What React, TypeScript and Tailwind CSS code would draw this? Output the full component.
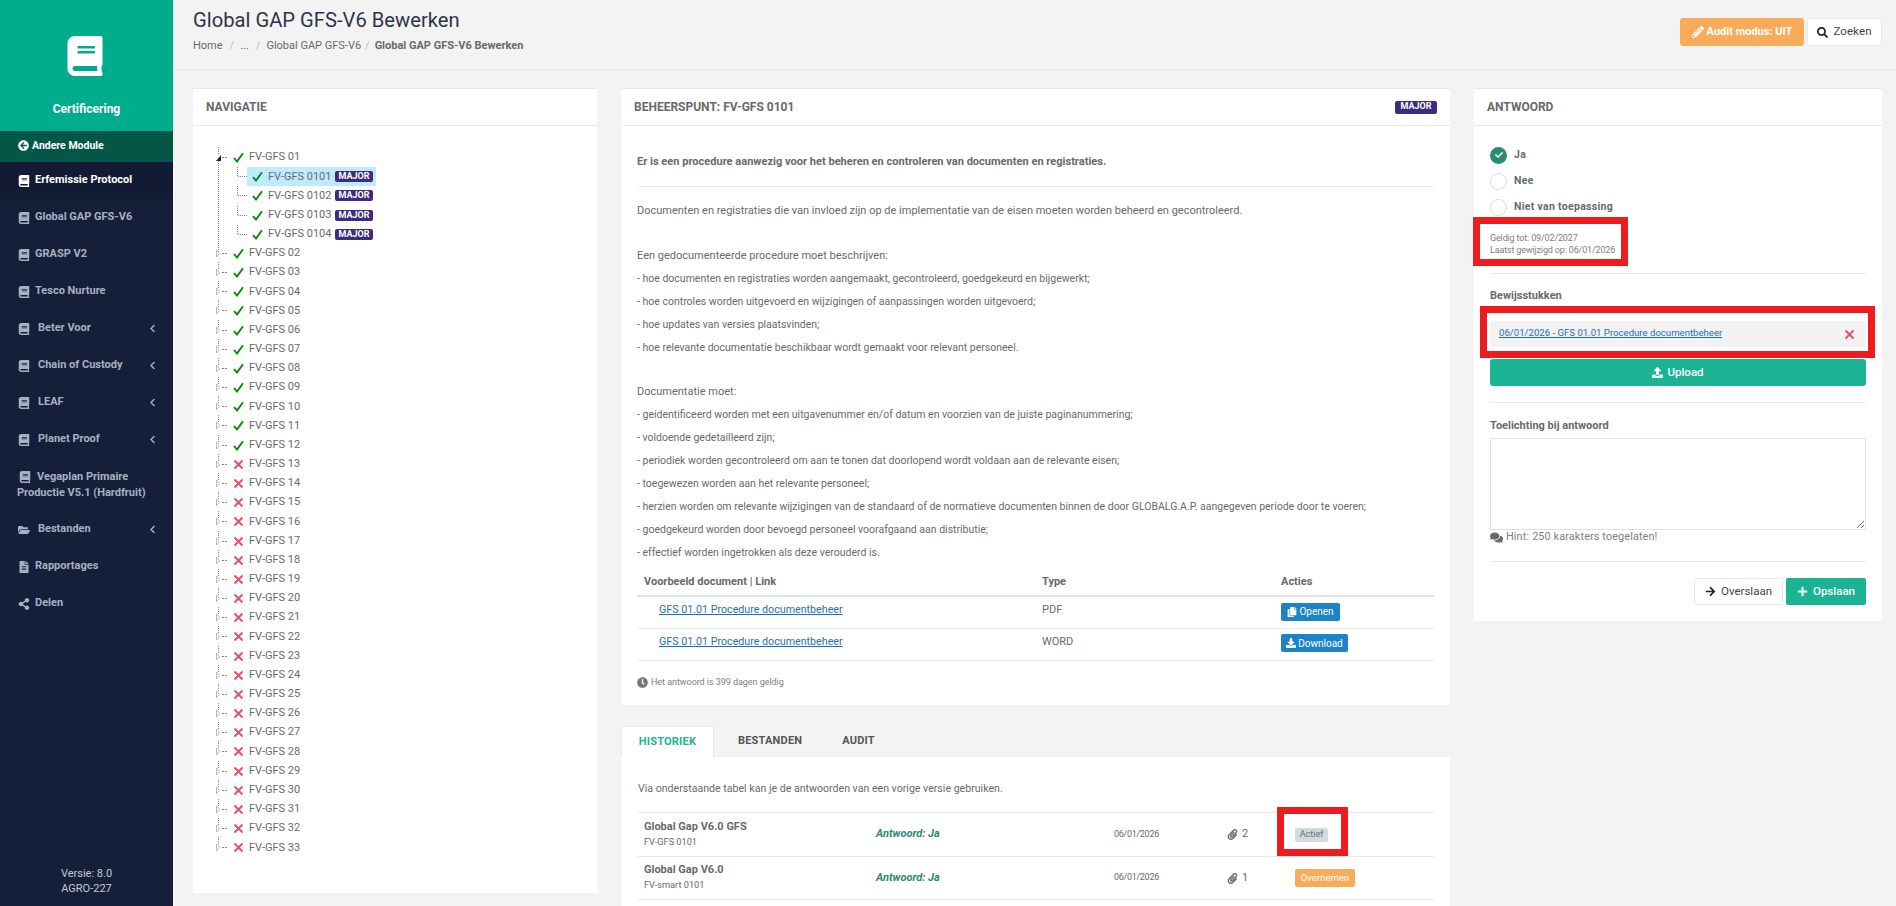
import React from "react";
import {
  FaBook, FaArrowCircleLeft, FaChevronLeft, FaFolderOpen, FaFileAlt, FaShareAlt, FaPencilAlt, FaSearch,
  FaUpload, FaArrowRight, FaPlus, FaComments, FaPaperclip, FaClock, FaCopy, FaDownload, FaCheck,
} from "react-icons/fa";

const Major = () => (
  <span className="inline-flex h-[11px] w-[38px] shrink-0 items-center justify-center rounded-[2px] bg-[#3d2b80] text-[9px] leading-none font-bold text-white">
    MAJOR
  </span>
);

const Tick = () => (
  <svg width="11" height="11" viewBox="0 0 11 11" className="shrink-0">
    <path d="M1 6.2 L4 9.5 L10 1.2" fill="none" stroke="#0b860b" strokeWidth="1.9" />
  </svg>
);
const Cross = () => (
  <svg width="11" height="11" viewBox="0 0 11 11" className="shrink-0">
    <path d="M1.5 1.5 L9.5 9.5 M9.5 1.5 L1.5 9.5" fill="none" stroke="#ed4f5f" strokeWidth="1.9" />
  </svg>
);

const dots = { stroke: "#888", strokeWidth: 1, strokeDasharray: "1 1", fill: "none" } as const;

function TopConnector({ open }: { open?: boolean }) {
  return (
    <svg width="18" height="19" viewBox="0 0 18 19" className="shrink-0 overflow-visible">
      <path d="M3.5 -1 V6" {...dots} />
      {open ? (
        <>
          <path d="M1 13 H6 V7 Z" fill="#222" />
          <path d="M3.5 13 V104" {...dots} />
        </>
      ) : (
        <path d="M1.5 6 L4.5 9.5 L1.5 13 Z" fill="none" stroke="#bbb" strokeWidth="1" />
      )}
      <path d="M7 9.5 H13" {...dots} strokeDasharray="2 1" />
    </svg>
  );
}

function ChildConnector() {
  return (
    <svg width="32" height="19" viewBox="0 0 32 19" className="shrink-0 overflow-visible">
      <path d="M22.5 0 V9.5 H32" {...dots} />
    </svg>
  );
}

function TopRow({ label, ok, open }: { label: string; ok: boolean; open?: boolean }) {
  return (
    <div className="flex h-[19.18px] items-center text-[11px] text-[#676a6c]">
      <TopConnector open={open} />
      {ok ? <Tick /> : <Cross />}
      <span className="ml-[5px] whitespace-nowrap">{label}</span>
    </div>
  );
}

function ChildRow({ label, active }: { label: string; active?: boolean }) {
  return (
    <div className="flex h-[19.18px] items-center text-[11px] text-[#676a6c]">
      <ChildConnector />
      <div className={`flex h-[19px] w-[129px] items-center pl-[5px] ${active ? "bg-[#beebff]" : ""}`}>
        <Tick />
        <span className="ml-[5px] w-[67px] whitespace-nowrap">{label}</span>
        <Major />
      </div>
    </div>
  );
}

const okTop = ["02", "03", "04", "05", "06", "07", "08", "09", "10", "11", "12"];
const badTop = ["13", "14", "15", "16", "17", "18", "19", "20", "21", "22", "23", "24", "25", "26", "27", "28", "29", "30", "31", "32", "33"];

function NavItem({ label, active, chevron, icon }: { label: string; active?: boolean; chevron?: boolean; icon?: React.ReactNode }) {
  return (
    <div className={`flex h-[37px] items-center pl-[19px] text-[11px] font-bold ${active ? "bg-[#131a33] text-white" : "text-[#a7b1c2]"}`}>
      <span className="flex w-[10px] justify-center text-[12px] [&>svg]:shrink-0">{icon ?? <FaBook />}</span>
      <span className={chevron ? "ml-[9px]" : "ml-[6px]"}>{label}</span>
      {chevron && <FaChevronLeft className="absolute left-[148px] text-[9px]" />}
    </div>
  );
}

function Card({ title, right, children, className }: { title: string; right?: React.ReactNode; children: React.ReactNode; className?: string }) {
  return (
    <section className={`bg-white ${className ?? ""}`}>
      <header className="flex h-[38px] items-center justify-between border-t border-b border-[#e7eaec] px-[13px] text-[12px] font-bold text-[#676a6c]">
        <span>{title}</span>
        {right}
      </header>
      {children}
    </section>
  );
}

const Line = ({ children }: { children: React.ReactNode }) => <p className="h-[23px] text-[11px] leading-[23px] text-[#676a6c]">{children}</p>;
const Item = ({ children }: { children: React.ReactNode }) => <p className="h-[23px] text-[10.5px] leading-[23px] text-[#676a6c]">{children}</p>;

function Radio({ label, on }: { label: string; on?: boolean }) {
  return (
    <div className="flex h-[26px] items-center pl-[16px]">
      {on ? (
        <span className="flex h-[17px] w-[17px] items-center justify-center rounded-full bg-[#2a8a73] text-[8px] text-white">
          <FaCheck />
        </span>
      ) : (
        <span className="h-[17px] w-[17px] rounded-full border border-[#dcdcdc]" />
      )}
      <span className="ml-[7px] text-[10.5px] font-bold tracking-[0.3px] text-[#676a6c]">{label}</span>
    </div>
  );
}

const Frame = ({ className }: { className: string }) => <div className={`pointer-events-none absolute border-[7px] border-[#ec1c1f] ${className}`} />;

export default function App() {
  return (
    <div className="flex h-[906px] w-[1896px] overflow-hidden bg-[#f3f3f3] font-['Roboto','Liberation_Sans',sans-serif] text-[#676a6c]">
      <aside className="relative flex w-[173px] shrink-0 flex-col bg-[#161f3a]">
        <div className="flex h-[131px] flex-col items-center bg-[#00ac8c] pt-[36px] text-white">
          <FaBook className="-ml-[3px] text-[40px]" />
          <div className="mt-[24px] text-[12px] font-bold">Certificering</div>
        </div>
        <div className="flex h-[31px] items-center bg-[#045746] pb-[2px] pl-[18px] text-[10.5px] font-bold text-white">
          <FaArrowCircleLeft className="mr-[3px] text-[11px]" />
          Andere Module
        </div>
        <NavItem label="Erfemissie Protocol" active />
        <NavItem label="Global GAP GFS-V6" />
        <NavItem label="GRASP V2" />
        <NavItem label="Tesco Nurture" />
        <NavItem label="Beter Voor" chevron />
        <NavItem label="Chain of Custody" chevron />
        <NavItem label="LEAF" chevron />
        <NavItem label="Planet Proof" chevron />
        <div className="flex h-[53px] flex-col justify-center pl-[17px] text-[11px] leading-[16px] font-bold text-[#a7b1c2]">
          <div className="flex items-center pl-[2px]">
            <FaBook className="text-[12px]" />
            <span className="ml-[6px]">Vegaplan Primaire</span>
          </div>
          <div>Productie V5.1 (Hardfruit)</div>
        </div>
        <NavItem label="Bestanden" chevron icon={<FaFolderOpen />} />
        <NavItem label="Rapportages" icon={<FaFileAlt />} />
        <NavItem label="Delen" icon={<FaShareAlt />} />
        <div className="mt-auto pb-[10px] text-center text-[11px] leading-[15px] text-[#c4cad6]">
          <div>Versie: 8.0</div>
          <div>AGRO-227</div>
        </div>
      </aside>

      <main className="flex min-w-0 flex-1 flex-col">
        <div className="flex h-[70px] shrink-0 justify-between border-b border-[#e7e7e7] pl-[20px] pr-[14px]">
          <div>
            <h1 className="mt-[8px] text-[20.2px] leading-[24px] text-[#2f3349]">Global GAP GFS-V6 Bewerken</h1>
            <div className="mt-[6px] flex text-[11px] leading-[16px] text-[#676a6c]">
              <span>Home</span>
              <span className="mr-[6px] ml-[7px] text-[#bbb]">/</span>
              <span>...</span>
              <span className="mr-[6px] ml-[7px] text-[#bbb]">/</span>
              <span>Global GAP GFS-V6</span>
              <span className="mx-[4px] text-[#bbb]">/</span>
              <span className="ml-[1px] font-bold">Global GAP GFS-V6 Bewerken</span>
            </div>
          </div>
          <div className="mt-[18px] flex h-[28px] gap-[3px]">
            <button className="flex w-[124px] items-center justify-center rounded-[3px] bg-[#f8ac59] text-[11px] font-bold text-white">
              <FaPencilAlt className="mr-[3px] text-[12px]" />
              Audit modus: UIT
            </button>
            <button className="flex w-[75px] items-center justify-center rounded-[3px] border border-[#e7eaec] bg-white text-[11.5px] tracking-[0.1px] text-[#444]">
              <FaSearch className="mr-[5px] text-[11px] text-[#222]" />
              Zoeken
            </button>
          </div>
        </div>

        <div className="flex gap-[24px] pt-[18px] pl-[20px]">
          <Card title="NAVIGATIE" className="h-[805px] w-[404px] shrink-0">
            <div className="pt-[22px] pl-[22px]">
              <TopRow label="FV-GFS 01" ok open />
              <ChildRow label="FV-GFS 0101" active />
              <ChildRow label="FV-GFS 0102" />
              <ChildRow label="FV-GFS 0103" />
              <ChildRow label="FV-GFS 0104" />
              {okTop.map((n) => (
                <TopRow key={n} label={`FV-GFS ${n}`} ok />
              ))}
              {badTop.map((n) => (
                <TopRow key={n} label={`FV-GFS ${n}`} ok={false} />
              ))}
            </div>
          </Card>

          <div className="w-[829px] shrink-0">
            <Card
              title="BEHEERSPUNT: FV-GFS 0101"
              right={<span className="inline-flex h-[13px] w-[42px] items-center justify-center rounded-[2px] bg-[#3d2b80] text-[9px] font-bold text-white">MAJOR</span>}
              className="h-[617px]"
            >
              <div className="px-[16px] pt-[24px]">
                <p className="h-[24px] text-[11.05px] leading-[24px] font-bold text-[#676a6c]">Er is een procedure aanwezig voor het beheren en controleren van documenten en registraties.</p>
                <div className="mt-[12px] border-t border-[#e7eaec]" />
                <div className="mt-[12px]">
                  <Line>Documenten en registraties die van invloed zijn op de implementatie van de eisen moeten worden beheerd en gecontroleerd.</Line>
                  <div className="h-[22px]" />
                  <Line>Een gedocumenteerde procedure moet beschrijven:</Line>
                  <Item>- hoe documenten en registraties worden aangemaakt, gecontroleerd, goedgekeurd en bijgewerkt;</Item>
                  <Item>- hoe controles worden uitgevoerd en wijzigingen of aanpassingen worden uitgevoerd;</Item>
                  <Item>- hoe updates van versies plaatsvinden;</Item>
                  <Item>- hoe relevante documentatie beschikbaar wordt gemaakt voor relevant personeel.</Item>
                  <div className="h-[21px]" />
                  <Line>Documentatie moet:</Line>
                  <Item>- geidentificeerd worden met een uitgavenummer en/of datum en voorzien van de juiste paginanummering;</Item>
                  <Item>- voldoende gedetailleerd zijn;</Item>
                  <Item>- periodiek worden gecontroleerd om aan te tonen dat doorlopend wordt voldaan aan de relevante eisen;</Item>
                  <Item>- toegewezen worden aan het relevante personeel;</Item>
                  <Item>- herzien worden om relevante wijzigingen van de standaard of de normatieve documenten binnen de door GLOBALG.A.P. aangegeven periode door te voeren;</Item>
                  <Item>- goedgekeurd worden door bevoegd personeel voorafgaand aan distributie;</Item>
                  <Item>- effectief worden ingetrokken als deze verouderd is.</Item>
                </div>
                <table className="mt-[2px] w-[797px] table-fixed text-[11px] text-[#676a6c]">
                  <thead>
                    <tr className="h-[30px] border-b-2 border-[#e0e3e6] text-left font-bold">
                      <th className="w-[405px] pt-[4px] pl-[7px]">Voorbeeld document | Link</th>
                      <th className="w-[239px] pt-[4px] pl-0">Type</th>
                      <th className="pt-[4px]">Acties</th>
                    </tr>
                  </thead>
                  <tbody>
                    <tr className="h-[32px] border-b border-[#e7eaec]">
                      <td className="pt-[5px] pl-[22px] align-top"><a className="text-[10.7px] text-[#1f6fb8] underline">GFS 01.01 Procedure documentbeheer</a></td>
                      <td className="pt-[5px] align-top">PDF</td>
                      <td>
                        <span className="inline-flex h-[18px] w-[59px] items-center justify-center rounded-[2px] bg-[#1c84c6] text-[10px] text-white">
                          <FaCopy className="mr-[2px]" />Openen
                        </span>
                      </td>
                    </tr>
                    <tr className="h-[32px] border-b border-[#e7eaec]">
                      <td className="pt-[5px] pl-[22px] align-top"><a className="text-[10.7px] text-[#1f6fb8] underline">GFS 01.01 Procedure documentbeheer</a></td>
                      <td className="pt-[5px] align-top">WORD</td>
                      <td>
                        <span className="inline-flex h-[18px] w-[67px] items-center justify-center rounded-[2px] bg-[#1c84c6] text-[10px] text-white">
                          <FaDownload className="mr-[2px]" />Download
                        </span>
                      </td>
                    </tr>
                  </tbody>
                </table>
                <div className="mt-[15px] flex items-center text-[9px] tracking-[-0.05px] text-[#808080]">
                  <FaClock className="mr-[3px] text-[11px] text-[#777]" />
                  Het antwoord is 399 dagen geldig
                </div>
              </div>
            </Card>

            <div className="mt-[21px] flex h-[31px] items-stretch text-[11px] font-bold tracking-[0.2px]">
              <div className="flex w-[93px] items-center justify-center rounded-t-[3px] border border-b-0 border-[#e7eaec] bg-white text-[#1ab394]">HISTORIEK</div>
              <div className="ml-[24px] flex items-center text-[#555]">BESTANDEN</div>
              <div className="ml-[40px] flex items-center text-[#555]">AUDIT</div>
            </div>
            <div className="h-[200px] bg-white px-[16px] pt-[23px]">
              <p className="pl-[1px] text-[10.6px] leading-[18px] text-[#676a6c]">Via onderstaande tabel kan je de antwoorden van een vorige versie gebruiken.</p>
              <div className="mt-[14px] border-t border-[#e7eaec]" />
              <div className="relative flex h-[44px] items-center border-b border-[#e7eaec] text-[11px]">
                <div className="w-[239px] pl-[7px]">
                  <div className="leading-[14px] font-bold">Global Gap V6.0 GFS</div>
                  <div className="text-[9.2px] leading-[16px]">FV-GFS 0101</div>
                </div>
                <div className="w-[238px] font-bold text-[#2a8a73] italic">Antwoord: Ja</div>
                <div className="w-[113px] text-[9px] tracking-[-0.3px]">06/01/2026</div>
                <div className="flex w-[68px] items-center"><FaPaperclip className="mr-[4px] text-[11px]" />2</div>
                <span className="inline-flex h-[14px] w-[33px] items-center justify-center rounded-[2px] bg-[#d1dade] text-[9px]">Actief</span>
                <Frame className="-top-[6px] left-[640px] h-[49px] w-[71px]" />
              </div>
              <div className="flex h-[43px] items-center border-b border-[#e7eaec] text-[11px]">
                <div className="w-[239px] pl-[7px]">
                  <div className="leading-[14px] font-bold">Global Gap V6.0</div>
                  <div className="text-[9.2px] leading-[16px]">FV-smart 0101</div>
                </div>
                <div className="w-[238px] font-bold text-[#2a8a73] italic">Antwoord: Ja</div>
                <div className="w-[113px] text-[9px] tracking-[-0.3px]">06/01/2026</div>
                <div className="flex w-[68px] items-center"><FaPaperclip className="mr-[4px] text-[11px]" />1</div>
                <span className="inline-flex h-[18px] w-[60px] items-center justify-center rounded-[2px] bg-[#f8ac59] text-[9.6px] text-white">Overnemen</span>
              </div>
            </div>
          </div>

          <Card title="ANTWOORD" className="h-[533px] w-[408px] shrink-0">
            <div className="pt-[16px]">
              <Radio label="Ja" on />
              <Radio label="Nee" />
              <Radio label="Niet van toepassing" />
              <div className="relative mx-[16px] mt-[12px] text-[9px] leading-[12px] tracking-[-0.15px] text-[#808080]">
                <div>Geldig tot: 09/02/2027</div>
                <div>Laatst gewijzigd op: 06/01/2026</div>
                <Frame className="-top-[15px] -left-[17px] h-[49px] w-[155px]" />
              </div>
              <div className="mx-[16px] mt-[17px] border-t border-[#e7eaec]" />
              <div className="mx-[16px] mt-[15px] text-[11px] leading-[14px] font-bold">Bewijsstukken</div>
              <div className="relative mx-[16px] mt-[18px] flex h-[26px] items-center justify-between rounded-[3px] bg-[#f2f2f2] pr-[11px] pl-[9px]">
                <a className="pb-[2px] text-[9.6px] text-[#1f6fb8] underline">06/01/2026 - GFS 01.01 Procedure documentbeheer</a>
                <Cross />
                <Frame className="-top-[15px] -left-[10px] h-[52px] w-[395px]" />
              </div>
              <button className="mx-[16px] mt-[12px] flex h-[27px] w-[376px] items-center justify-center rounded-[3px] bg-[#1ab394] text-[11.5px] font-medium text-white">
                <FaUpload className="mr-[4px] text-[11px]" />
                Upload
              </button>
              <div className="mx-[16px] mt-[16px] border-t border-[#e7eaec]" />
              <div className="mx-[16px] mt-[16px] text-[11px] leading-[14px] font-bold">Toelichting bij antwoord</div>
              <textarea className="mx-[16px] mt-[5px] block h-[92px] w-[376px] border border-[#e0e0e0] bg-white" />
              <div className="mx-[16px] flex h-[14px] items-center text-[10.9px] tracking-[0.1px] text-[#808080]">
                <FaComments className="mr-[3px] text-[13px] text-[#676a6c]" />
                <span className="mr-[3px]">Hint:</span> 250 karakters toegelaten!
              </div>
              <div className="mx-[16px] mt-[17px] border-t border-[#e7eaec]" />
              <div className="mx-[16px] mt-[16px] flex justify-end gap-[3px]">
                <button className="flex h-[27px] w-[89px] items-center justify-center rounded-[2px] border border-[#e7eaec] bg-white text-[11.5px] text-[#444]">
                  <FaArrowRight className="mr-[5px] text-[11px] text-[#222]" />
                  Overslaan
                </button>
                <button className="flex h-[27px] w-[80px] items-center justify-center rounded-[2px] bg-[#1ab394] text-[11.5px] font-medium text-white">
                  <FaPlus className="mr-[5px] text-[11px]" />
                  Opslaan
                </button>
              </div>
            </div>
          </Card>
        </div>
      </main>
    </div>
  );
}
